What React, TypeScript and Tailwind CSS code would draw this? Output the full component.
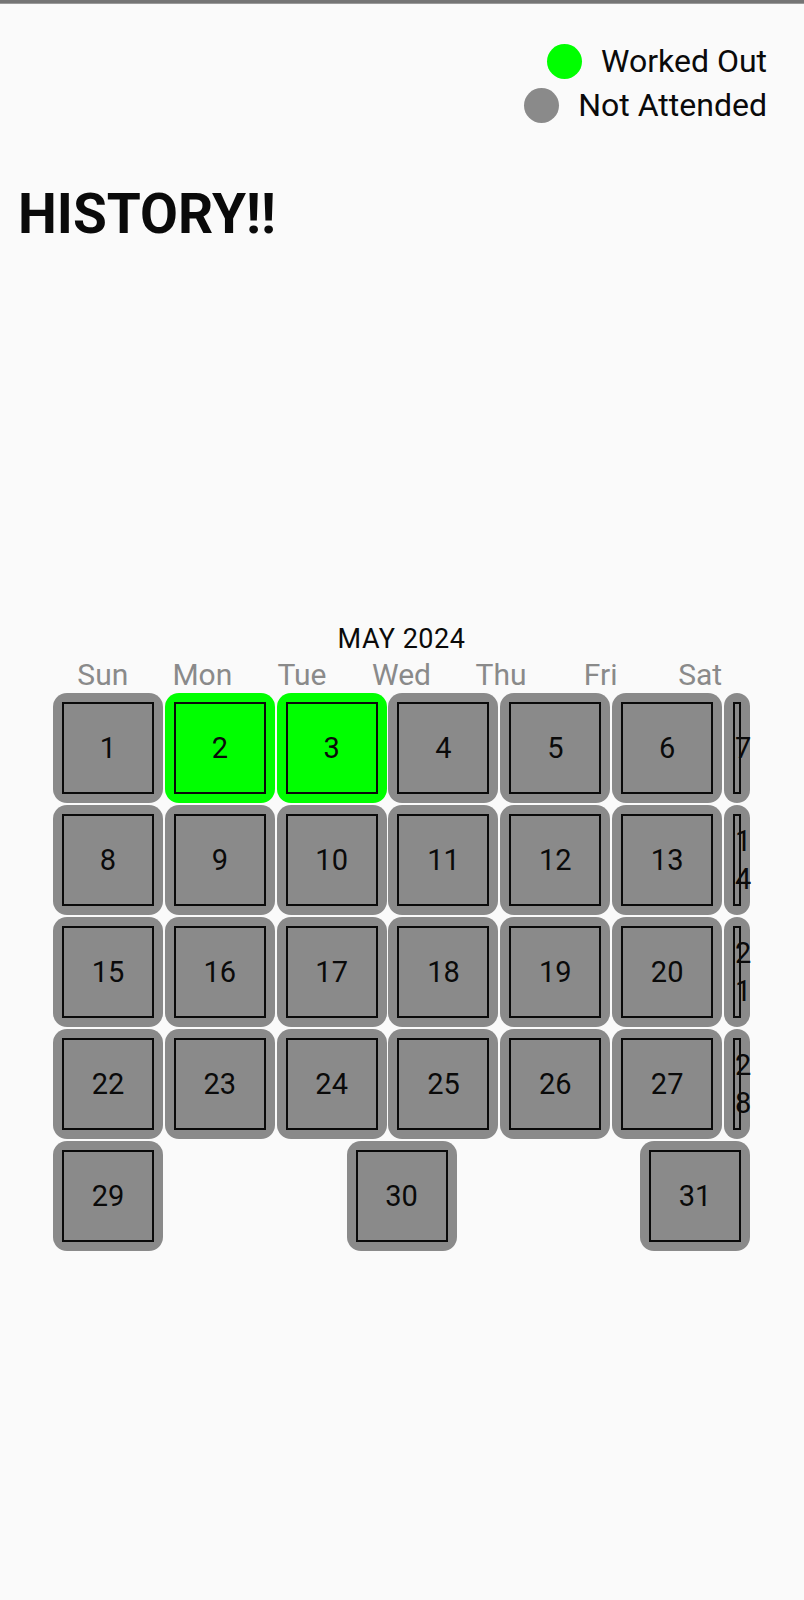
import React from 'react';

type Day = { n: number; worked?: boolean };

const weeks: Day[][] = [
  [{ n: 1 }, { n: 2, worked: true }, { n: 3, worked: true }, { n: 4 }, { n: 5 }, { n: 6 }, { n: 7 }],
  [{ n: 8 }, { n: 9 }, { n: 10 }, { n: 11 }, { n: 12 }, { n: 13 }, { n: 14 }],
  [{ n: 15 }, { n: 16 }, { n: 17 }, { n: 18 }, { n: 19 }, { n: 20 }, { n: 21 }],
  [{ n: 22 }, { n: 23 }, { n: 24 }, { n: 25 }, { n: 26 }, { n: 27 }, { n: 28 }],
  [{ n: 29 }, { n: 30 }, { n: 31 }],
];

const weekDays = ['Sun', 'Mon', 'Tue', 'Wed', 'Thu', 'Fri', 'Sat'];

const DayCell = ({ day, narrow }: { day: Day; narrow?: boolean }) => {
  const bg = day.worked ? 'bg-[#00ff00]' : 'bg-[#8a8a8a]';
  return (
    <div className={`${narrow ? 'w-[26px]' : 'w-[110px]'} h-[110px] shrink-0 rounded-[14px] p-[9px] ${bg}`}>
      <div className={`h-full border-2 border-[#0a0a0a] flex flex-col justify-center ${bg}`}>
        <div className="text-center break-all text-[29px] leading-[38px] text-[#0a0a0a]">{day.n}</div>
      </div>
    </div>
  );
};

export default function App() {
  return (
    <div className="min-h-[1600px] bg-[#fafafa] font-['Roboto','Liberation_Sans',sans-serif]">
      <div className="h-[4px] bg-[#757575] border-b border-[#9a9a9a]" />

      {/* legenda */}
      <div className="mt-[35px] pr-[37px] flex flex-col items-end">
        <div className="h-[44px] flex items-center gap-[19px]">
          <div className="w-[35px] h-[35px] rounded-full bg-[#00ff00]" />
          <span className="text-[32px] text-[#0a0a0a]">Worked Out</span>
        </div>
        <div className="h-[44px] flex items-center gap-[19px]">
          <div className="w-[35px] h-[35px] rounded-full bg-[#8a8a8a]" />
          <span className="text-[32px] text-[#0a0a0a]">Not Attended</span>
        </div>
      </div>

      <h1 className="mt-[57px] pl-[18px] h-[60px] leading-[60px] text-[55px] font-bold text-[#0a0a0a]">HISTORY!!</h1>

      {/* calendario */}
      <div className="mt-[380px] ml-[53px] w-[697px]">
        <div className="h-[30px] leading-[30px] text-center text-[27px] tracking-[0.5px] text-[#0a0a0a]">MAY 2024</div>
        <div className="mt-[3px] grid grid-cols-7 h-[36px] leading-[36px] text-center text-[30px] text-[#8a8a8a]">
          {weekDays.map((d) => (
            <span key={d}>{d}</span>
          ))}
        </div>
        <div className="flex flex-col gap-[2px]">
          {weeks.map((week, i) => (
            <div key={i} className="flex justify-between">
              {week.map((day, j) => (
                <DayCell key={day.n} day={day} narrow={week.length === 7 && j === 6} />
              ))}
            </div>
          ))}
        </div>
      </div>
    </div>
  );
}
